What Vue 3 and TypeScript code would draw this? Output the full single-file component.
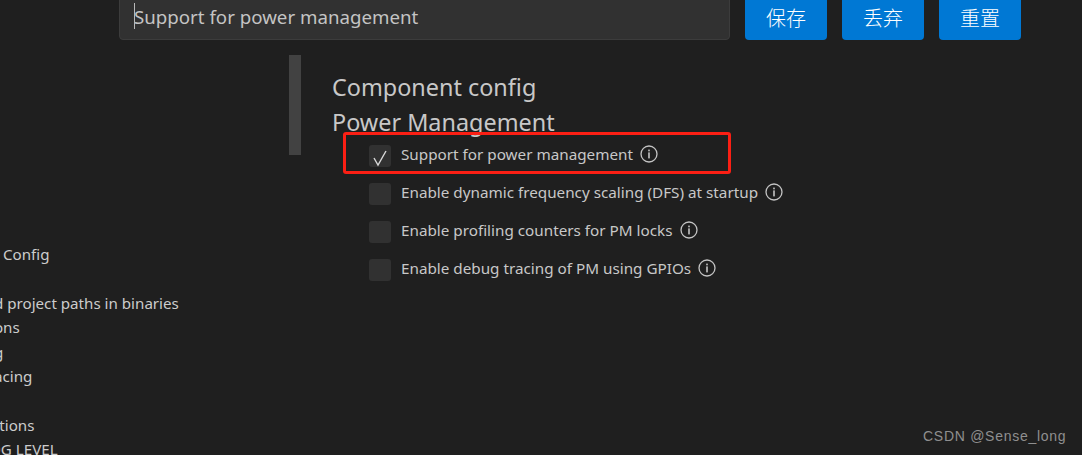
<script setup lang="ts">
interface SidebarRow {
  text: string
  shift: number
}

const sidebarRows: SidebarRow[] = [
  { text: 'Config', shift: 3 },
  { text: '', shift: 0 },
  { text: 'd project paths in binaries', shift: -6 },
  { text: 'ions', shift: -10 },
  { text: 'g', shift: -6 },
  { text: 'acing', shift: -6 },
  { text: '', shift: 0 },
  { text: 'ptions', shift: -10 },
  { text: 'OG LEVEL', shift: -11 }
]

const options = [
  { label: 'Support for power management', checked: true },
  { label: 'Enable dynamic frequency scaling (DFS) at startup', checked: false },
  { label: 'Enable profiling counters for PM locks', checked: false },
  { label: 'Enable debug tracing of PM using GPIOs', checked: false }
]

const actions = ['保存', '丢弃', '重置']
</script>

<template>
  <div class="page">
    <header class="toolbar">
      <div class="search">
        <span class="caret"></span>
        <span>Support for power management</span>
      </div>
      <button v-for="a in actions" :key="a" class="action">{{ a }}</button>
    </header>

    <main class="body">
      <nav class="sidebar">
        <div
          v-for="(row, i) in sidebarRows"
          :key="i"
          class="side-row"
          :style="{ marginLeft: row.shift + 'px' }"
        >{{ row.text }}</div>
      </nav>

      <div class="scroll-thumb"></div>

      <section class="content">
        <h2 class="heading">Component config</h2>
        <h2 class="heading">Power Management</h2>
        <ul class="options">
          <li v-for="o in options" :key="o.label" class="option">
            <span class="box">
              <svg v-if="o.checked" width="22" height="22" viewBox="0 0 22 22">
                <path d="M5 13 L9 20 L17 6" fill="none" stroke="#d8d8d8" stroke-width="1.4" />
              </svg>
            </span>
            <span class="label">{{ o.label }}</span>
            <svg class="info" width="18" height="18" viewBox="0 0 18 18">
              <circle cx="9" cy="9" r="8" fill="none" stroke="#c4c4c4" stroke-width="1.3" />
              <rect x="8.2" y="4.6" width="1.6" height="1.7" fill="#c4c4c4" />
              <rect x="8.2" y="7.4" width="1.6" height="6" fill="#c4c4c4" />
            </svg>
          </li>
        </ul>
      </section>
    </main>

    <div class="highlight"></div>
    <div class="watermark">CSDN @Sense_long</div>
  </div>
</template>

<style>
html,
body {
  background: #1f1f1f;
  overflow: hidden;
}
</style>

<style scoped>
.page {
  position: relative;
  width: 1082px;
  height: 455px;
  overflow: hidden;
  background: #1f1f1f;
  color: #cccccc;
  font-family: "Noto Sans", "Open Sans", sans-serif;
}

.toolbar {
  display: flex;
  align-items: stretch;
  gap: 15px;
  height: 46px;
  margin-top: -6px;
  padding-left: 119px;
}

.search {
  position: relative;
  display: flex;
  align-items: center;
  width: 611px;
  box-sizing: border-box;
  padding: 0 0 2px 14px;
  background: #313131;
  border: 1px solid #3c3c3c;
  border-radius: 4px;
  font-size: 18.7px;
  color: #c4c4c4;
}

.caret {
  position: absolute;
  left: 14px;
  top: 8px;
  width: 1px;
  height: 26px;
  background: #b8b8b8;
}

.action {
  width: 82px;
  border: 0;
  border-radius: 4px;
  background: #0078d4;
  color: #ffffff;
  font-family: "Noto Sans CJK SC", sans-serif;
  font-size: 20px;
  font-weight: 300;
  padding: 0;
}

.body {
  display: flex;
  align-items: flex-start;
}

.sidebar {
  width: 289px;
  height: 415px;
  padding-top: 202px;
  box-sizing: border-box;
  overflow: hidden;
  flex: none;
}

.side-row {
  height: 24.4px;
  line-height: 24.4px;
  font-size: 15.15px;
  white-space: nowrap;
}

.scroll-thumb {
  flex: none;
  width: 12px;
  height: 100px;
  margin-top: 15px;
  background: #424242;
}

.content {
  margin-left: 31px;
  padding-top: 30px;
}

.heading {
  margin: 0;
  height: 34px;
  line-height: 34px;
  font-size: 23.4px;
  font-weight: 400;
  color: #c8c8c8;
}

.heading + .heading {
  padding-top: 1px;
}

.options {
  list-style: none;
  margin: -2px 0 0;
  padding: 0 0 0 37px;
}

.option {
  display: flex;
  align-items: center;
  height: 38px;
}

.box {
  flex: none;
  width: 22px;
  height: 22px;
  border-radius: 3px;
  background: #313131;
}

.box svg {
  display: block;
}

.label {
  margin-left: 10px;
  font-size: 15.25px;
  color: #c8c8c8;
  position: relative;
  top: -2px;
}

.info {
  margin-left: 7px;
  flex: none;
  position: relative;
  top: -2px;
}

.highlight {
  position: absolute;
  left: 343px;
  top: 132px;
  width: 388px;
  height: 42px;
  box-sizing: border-box;
  border: 3px solid #fb1f14;
  border-radius: 3px;
}

.watermark {
  position: absolute;
  left: 923px;
  top: 428px;
  font-family: "Liberation Sans", sans-serif;
  font-size: 14px;
  letter-spacing: 0.72px;
  color: #8f8f8f;
}
</style>
